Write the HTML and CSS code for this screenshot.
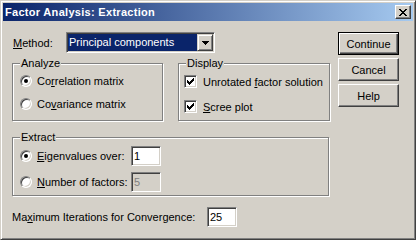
FILE: index.html
```html
<!DOCTYPE html>
<html lang="en">
<head>
<meta charset="UTF-8">
<title>Factor Analysis: Extraction</title>
<link rel="stylesheet" href="styles.css">
</head>
<body>
<div class="window">
    <div class="titlebar">
        <span class="title">Factor Analysis: Extraction</span>
        <button class="close_btn">
            <svg width="8" height="7" viewBox="0 0 8 7" shape-rendering="crispEdges"><path d="M0 0h2v1h-2z M6 0h2v1h-2z M1 1h2v1h-2z M5 1h2v1h-2z M2 2h4v1h-4z M3 3h2v1h-2z M2 4h4v1h-4z M1 5h2v1h-2z M5 5h2v1h-2z M0 6h2v1h-2z M6 6h2v1h-2z" fill="#000"/></svg>
        </button>
    </div>

    <div class="dialog">
        <div class="main">
            <div class="method_row">
                <span class="method_label"><u>M</u>ethod:</span>
                <div class="combo">
                    <span class="combo_value">Principal components</span>
                    <span class="combo_arrow">
                        <svg width="7" height="4" viewBox="0 0 7 4" shape-rendering="crispEdges"><path d="M0 0h7v1h-7z M1 1h5v1h-5z M2 2h3v1h-3z M3 3h1v1h-1z" fill="#000"/></svg>
                    </span>
                </div>
            </div>

            <div class="group_row">
                <div class="group analyze">
                    <span class="group_label">Analyze</span>
                    <div class="options radios">
                        <div class="option"><span class="radio checked"></span><span>Co<u>r</u>relation matrix</span></div>
                        <div class="option"><span class="radio"></span><span>Co<u>v</u>ariance matrix</span></div>
                    </div>
                </div>
                <div class="group display">
                    <span class="group_label">Display</span>
                    <div class="options checks">
                        <div class="option"><span class="check"><svg width="9" height="9" viewBox="0 0 9 9" shape-rendering="crispEdges"><path d="M7 1h1v1h-1z M6 2h2v1h-2z M1 3h1v1h-1z M5 3h3v1h-3z M1 4h2v1h-2z M4 4h3v1h-3z M1 5h5v1h-5z M2 6h3v1h-3z M3 7h1v1h-1z" fill="#000"/></svg></span><span>Unrotated <u>f</u>actor solution</span></div>
                        <div class="option"><span class="check"><svg width="9" height="9" viewBox="0 0 9 9" shape-rendering="crispEdges"><path d="M7 1h1v1h-1z M6 2h2v1h-2z M1 3h1v1h-1z M5 3h3v1h-3z M1 4h2v1h-2z M4 4h3v1h-3z M1 5h5v1h-5z M2 6h3v1h-3z M3 7h1v1h-1z" fill="#000"/></svg></span><span><u>S</u>cree plot</span></div>
                    </div>
                </div>
            </div>

            <div class="group extract">
                <span class="group_label">Extract</span>
                <div class="options extract_opts">
                    <div class="option"><span class="radio checked"></span><span class="extract_label"><u>E</u>igenvalues over:</span><span class="num_input">1</span></div>
                    <div class="option"><span class="radio"></span><span class="extract_label"><u>N</u>umber of factors:</span><span class="num_input disabled">5</span></div>
                </div>
            </div>

            <div class="iter_row">
                <span class="iter_label">Ma<u>x</u>imum Iterations for Convergence:</span>
                <span class="num_input">25</span>
            </div>
        </div>

        <div class="buttons">
            <button class="btn default">Continue</button>
            <button class="btn">Cancel</button>
            <button class="btn">Help</button>
        </div>
    </div>
</div>
</body>
</html>
```

FILE: styles.css
```css
/*  PAGE  */
body {
    margin: 0;
    background-color: #d4d0c8;
    font-family: "Liberation Sans", Arial, sans-serif;
    font-size: 11px;
    color: #000;
}
u {
    text-decoration-thickness: 1px;
    text-underline-offset: 1px;
}

/*  WINDOW  */
.window {
    width: 416px;
    height: 240px;
    box-sizing: border-box;
    border: 1px solid;
    border-color: #d4d0c8 #404040 #404040 #d4d0c8;
    box-shadow: inset 1px 1px #fff, inset -1px -1px #808080;
    padding: 2px;
    background-color: #d4d0c8;
}
.titlebar {
    height: 18px;
    display: flex;
    align-items: center;
    justify-content: space-between;
    padding: 0 2px 0 2px;
    background: linear-gradient(to right, #0a246a, #a6caf0);
}
.title {
    color: #fff;
    font-weight: bold;
    font-size: 11px;
    letter-spacing: 0.3px;
}
.close_btn {
    width: 16px;
    height: 14px;
    box-sizing: border-box;
    padding: 0;
    display: grid;
    place-items: center;
    background-color: #d4d0c8;
    border: 1px solid;
    border-color: #fff #404040 #404040 #fff;
    box-shadow: inset -1px -1px #808080;
}

/*  DIALOG  */
.dialog {
    display: flex;
    gap: 8px;
    padding: 11px 0 0 9px;
}
.main {
    width: 318px;
}
.method_row {
    display: flex;
    align-items: center;
    height: 21px;
}
.method_label {
    width: 53px;
    margin-left: 1px;
}
.combo {
    width: 149px;
    height: 21px;
    box-sizing: border-box;
    display: flex;
    padding: 1px;
    background-color: #fff;
    border: 1px solid;
    border-color: #808080 #fff #fff #808080;
    box-shadow: inset 1px 1px #404040, inset -1px -1px #d4d0c8;
}
.combo_value {
    flex: 1;
    background-color: #0a246a;
    color: #fff;
    padding-left: 1px;
    line-height: 17px;
}
.combo_arrow {
    width: 16px;
    height: 17px;
    box-sizing: border-box;
    display: grid;
    place-items: center;
    background-color: #d4d0c8;
    border: 1px solid;
    border-color: #d4d0c8 #404040 #404040 #d4d0c8;
    box-shadow: inset 1px 1px #fff, inset -1px -1px #808080;
}

/*  GROUPS  */
.group_row {
    display: flex;
    justify-content: space-between;
    margin-top: 10px;
}
.group {
    box-sizing: border-box;
    border: 1px solid #808080;
    box-shadow: inset 1px 1px #fff, 1px 1px #fff;
}
.analyze {
    width: 151px;
    height: 58px;
}
.display {
    width: 152px;
    height: 58px;
}
.extract {
    width: 317px;
    height: 59px;
    margin-top: 16px;
}
.group_label {
    display: block;
    width: fit-content;
    margin: -7px 0 0 7px;
    padding: 0 1px;
    line-height: 13px;
    background-color: #d4d0c8;
}
.options {
    display: flex;
    flex-direction: column;
}
.radios {
    padding: 1px 0 0 7px;
    gap: 3px;
}
.checks {
    padding: 1px 0 0 5px;
    gap: 4px;
}
.checks .option {
    height: 21px;
}
.extract_opts {
    padding: 2px 0 0 7px;
    gap: 6px;
}
.option {
    display: flex;
    align-items: center;
    height: 20px;
    white-space: nowrap;
}
.radio {
    flex: none;
    width: 12px;
    height: 12px;
    box-sizing: border-box;
    margin-right: 5px;
    display: grid;
    place-items: center;
    border-radius: 50%;
    background-color: #fff;
    border: 1px solid;
    border-color: #808080 #fff #fff #808080;
    box-shadow: inset 1px 1px #404040, inset -1px -1px #d4d0c8;
}
.radio.checked::after {
    content: "";
    width: 4px;
    height: 4px;
    border-radius: 50%;
    background-color: #000;
}
.check {
    flex: none;
    width: 13px;
    height: 13px;
    box-sizing: border-box;
    margin-right: 6px;
    display: grid;
    place-items: center;
    background-color: #fff;
    border: 1px solid;
    border-color: #808080 #fff #fff #808080;
    box-shadow: inset 1px 1px #404040, inset -1px -1px #d4d0c8;
}
.extract_label {
    width: 94px;
}
.num_input {
    flex: none;
    width: 30px;
    height: 20px;
    box-sizing: border-box;
    padding-left: 2px;
    line-height: 18px;
    background-color: #fff;
    border: 1px solid;
    border-color: #808080 #fff #fff #808080;
    box-shadow: inset 1px 1px #404040, inset -1px -1px #d4d0c8;
}
.num_input.disabled {
    background-color: #d4d0c8;
    color: #808080;
}
.iter_row {
    display: flex;
    align-items: center;
    height: 20px;
    margin-top: 11px;
}
.iter_label {
    width: 195px;
}

/*  BUTTONS  */
.buttons {
    display: flex;
    flex-direction: column;
    gap: 3px;
}
.btn {
    width: 61px;
    height: 23px;
    box-sizing: border-box;
    padding: 0;
    font-family: inherit;
    font-size: 11px;
    color: #000;
    background-color: #d4d0c8;
    border: 1px solid;
    border-color: #fff #404040 #404040 #fff;
    box-shadow: inset -1px -1px #808080;
}
.btn.default {
    border: 1px solid #000;
    box-shadow: inset 1px 1px #fff, inset -1px -1px #404040, inset -2px -2px #808080;
}
```
